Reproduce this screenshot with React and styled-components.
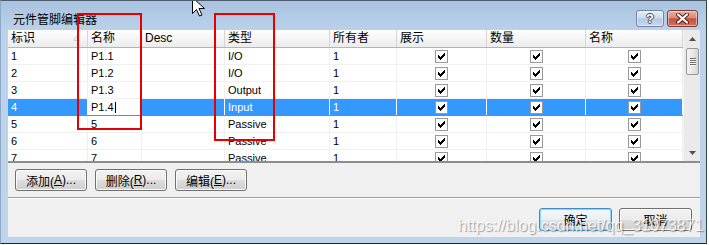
import React from 'react';
import styled, { createGlobalStyle } from 'styled-components';

const GlobalStyle = createGlobalStyle`
  html, body {
    margin: 0;
    padding: 0;
    background: #ffffff;
  }
  body {
    font-family: "Liberation Sans", "Noto Sans CJK SC", sans-serif;
  }
`;

const COLUMNS = '80px 54px 83px 105px 67px 90px 99px 97px';

const headers = ['标识', '名称', 'Desc', '类型', '所有者', '展示', '数量', '名称'];

const rows = [
  { id: '1', name: 'P1.1', type: 'I/O' },
  { id: '2', name: 'P1.2', type: 'I/O' },
  { id: '3', name: 'P1.3', type: 'Output' },
  { id: '4', name: 'P1.4', type: 'Input', selected: true },
  { id: '5', name: '5', type: 'Passive' },
  { id: '6', name: '6', type: 'Passive' },
  { id: '7', name: '7', type: 'Passive' },
];

const Window = styled.div`
  position: relative;
  width: 707px;
  height: 244px;
  box-sizing: border-box;
  display: flex;
  flex-direction: column;
  padding: 0 6px 6px 7px;
  background: linear-gradient(#a8c2e0 0px, #bcd2ea 30px, #bed4eb 100%);
  border-top: 1px solid #4e5d6e;
  border-left: 1px solid #8ea9c7;
  border-right: 1px solid #34414f;
  border-bottom: 1px solid #1c2631;
  box-shadow: 0 1px 0 #58c4da;
  overflow: hidden;
`;

const TitleBar = styled.div`
  height: 29px;
  flex-shrink: 0;
  display: flex;
  align-items: flex-start;
`;

const Title = styled.div`
  flex: 1;
  margin: 11px 0 0 5px;
  font-size: 12px;
  line-height: 16px;
  color: #000;
`;

const CaptionButton = styled.div`
  width: ${p => p.$w}px;
  height: 17px;
  box-sizing: border-box;
  margin-top: 9px;
  margin-right: ${p => p.$mr}px;
  border-radius: 3px;
  display: flex;
  align-items: center;
  justify-content: center;
  border: 1px solid ${p => (p.$close ? '#7c3a32' : '#6f86a6')};
  background: ${p =>
    p.$close
      ? 'linear-gradient(#eab0a3 0%, #dc8a7a 45%, #c5503f 52%, #d46f5d 100%)'
      : 'linear-gradient(#e6eef8 0%, #cddcee 45%, #b4c8e1 52%, #c8d8ec 100%)'};
  box-shadow: inset 0 0 0 1px rgba(255, 255, 255, 0.45);
`;

const HelpGlyph = styled.span`
  font: bold 13px/13px "Liberation Sans", sans-serif;
  color: #fff;
  text-shadow: -1px 0 #3c4d66, 1px 0 #3c4d66, 0 -1px #3c4d66, 0 1px #3c4d66;
`;

const Panel = styled.div`
  flex: 1;
  display: flex;
  flex-direction: column;
  background: #f0f0f0;
`;

const Grid = styled.div`
  height: 133px;
  box-sizing: border-box;
  display: flex;
  border-bottom: 2px solid #8d8d8d;
`;

const Table = styled.div`
  flex: 1;
  display: flex;
  flex-direction: column;
  background: #fff;
  overflow: hidden;
`;

const HeaderRow = styled.div`
  display: grid;
  grid-template-columns: ${COLUMNS};
  height: 18px;
  box-sizing: border-box;
  border-bottom: 1px solid #b5b5b5;
  background: linear-gradient(#ffffff, #f3f3f3 60%, #ececec);
`;

const HeaderCell = styled.div`
  display: flex;
  align-items: center;
  justify-content: space-between;
  padding-left: 3px;
  border-right: 1px solid #d5d5d5;
  font-size: 12px;
  line-height: 17px;
  color: #000;
  white-space: nowrap;
`;

const SortMark = styled.svg`
  width: 7px;
  height: 5px;
  margin-right: 7px;
`;

const Body = styled.div`
  flex: 1;
  overflow: hidden;
`;

const Row = styled.div`
  display: grid;
  grid-template-columns: ${COLUMNS};
  height: 17px;
  box-sizing: border-box;
  border-bottom: 1px solid ${p => (p.$selected ? '#3399ff' : '#f0f0f0')};
  background: ${p => (p.$selected ? '#3399ff' : '#fff')};
`;

const Cell = styled.div`
  display: flex;
  align-items: center;
  justify-content: ${p => (p.$center ? 'center' : 'flex-start')};
  padding-left: ${p => (p.$center ? 0 : 3)}px;
  border-right: 1px solid ${p => (p.$selected ? '#ffffff' : '#f0f0f0')};
  background: ${p => (p.$editing ? '#fff' : 'transparent')};
  font-size: 11px;
  line-height: 16px;
  color: ${p => (p.$selected && !p.$editing ? '#fff' : '#000')};
  white-space: nowrap;
  overflow: hidden;
`;

const Caret = styled.span`
  display: inline-block;
  width: 1px;
  height: 11px;
  margin-left: 1px;
  background: #000;
`;

const CheckBox = styled.span`
  width: 13px;
  height: 13px;
  box-sizing: border-box;
  border: 1px solid #999999;
  background: #fff;
  display: flex;
  align-items: center;
  justify-content: center;
`;

const Scrollbar = styled.div`
  width: 17px;
  display: flex;
  flex-direction: column;
  background: #eaeaea;
  border-left: 1px solid #f4f4f4;
  box-sizing: border-box;
`;

const ArrowButton = styled.div`
  height: 17px;
  flex-shrink: 0;
  display: flex;
  align-items: center;
  justify-content: center;
`;

const Thumb = styled.div`
  height: 27px;
  margin: 1px 1px 0 2px;
  box-sizing: border-box;
  border: 1px solid #979797;
  border-radius: 2px;
  background: linear-gradient(90deg, #f4f4f4, #e8e8e8 50%, #d6d6d6);
  display: flex;
  flex-direction: column;
  align-items: center;
  justify-content: center;
  gap: 1px;
`;

const GripLine = styled.span`
  width: 6px;
  height: 1px;
  background: #6d6d6d;
  box-shadow: 0 1px 0 #fafafa;
`;

const Track = styled.div`
  flex: 1;
`;

const ButtonBar = styled.div`
  display: flex;
  gap: 8px;
  padding: 6px 0 0 7px;
`;

const Button = styled.div`
  width: ${p => p.$w || 72}px;
  height: ${p => p.$h || 22}px;
  box-sizing: border-box;
  display: flex;
  align-items: center;
  justify-content: center;
  border: 1px solid ${p => (p.$default ? '#3c8fd0' : '#707070')};
  border-radius: 3px;
  background: ${p =>
    p.$default
      ? 'linear-gradient(#f4f8fb 0%, #eceff2 50%, #e0e4e8 51%, #d6dadf 100%)'
      : 'linear-gradient(#f2f2f2 0%, #ebebeb 50%, #dddddd 51%, #cfcfcf 100%)'};
  box-shadow: inset 0 0 0 1px ${p => (p.$default ? '#8fd4f4' : '#fbfbfb')};
  font-size: 12px;
  color: #000;
  white-space: nowrap;

  u {
    text-decoration: underline;
    text-underline-offset: 1px;
  }
`;

const Separator = styled.div`
  margin-top: 6px;
  height: 2px;
  box-sizing: border-box;
  border-top: 1px solid #a0a0a0;
  border-bottom: 1px solid #ffffff;
`;

const Footer = styled.div`
  flex: 1;
  display: flex;
  justify-content: flex-end;
  align-items: flex-start;
  gap: 7px;
  padding: 9px 8px 0 0;
`;

const Annotation = styled.div`
  position: absolute;
  left: ${p => p.$x}px;
  top: ${p => p.$y}px;
  width: ${p => p.$w}px;
  height: ${p => p.$h}px;
  box-sizing: border-box;
  border: 2px solid #e60000;
  pointer-events: none;
`;

const Watermark = styled.div`
  position: absolute;
  left: 457px;
  top: 217px;
  font-size: 16px;
  line-height: 16px;
  color: rgba(255, 255, 255, 0.8);
  text-shadow: 1px 1px 1px rgba(0, 0, 0, 0.35);
  white-space: nowrap;
  pointer-events: none;
`;

const Cursor = styled.svg`
  position: absolute;
  left: 191px;
  top: -4px;
  width: 13px;
  height: 20px;
`;

const Check = () => (
  <svg width="7" height="7" viewBox="0 0 7 7" shapeRendering="crispEdges">
    <path
      d="M6 0h1v1h-1z M5 1h2v1h-2z M0 2h1v1h-1z M4 2h3v1h-3z M0 3h2v1h-2z M3 3h3v1h-3z M0 4h5v1h-5z M1 5h3v1h-3z M2 6h1v1h-1z"
      fill="#000"
    />
  </svg>
);

const Arrow = ({ down }) => (
  <svg width="7" height="4" viewBox="0 0 7 4">
    <path d={down ? 'M0 0h7L3.5 4z' : 'M0 4h7L3.5 0z'} fill="#505050" />
  </svg>
);

const App = () => {
  return (
    <>
      <GlobalStyle />
      <Window>
        <TitleBar>
          <Title>元件管脚编辑器</Title>
          <CaptionButton $w={28} $mr={3}>
            <HelpGlyph>?</HelpGlyph>
          </CaptionButton>
          <CaptionButton $w={31} $mr={2} $close>
            <svg width="13" height="11" viewBox="0 0 13 11">
              <path d="M2 1.5L11 9.5M11 1.5L2 9.5" stroke="#4a1f1a" strokeWidth="4" strokeLinecap="round" />
              <path d="M2 1.5L11 9.5M11 1.5L2 9.5" stroke="#fff" strokeWidth="2.2" strokeLinecap="round" />
            </svg>
          </CaptionButton>
        </TitleBar>

        <Panel>
          <Grid>
            <Table>
              <HeaderRow>
                {headers.map((h, i) => (
                  <HeaderCell key={i}>
                    {h}
                    {i === 0 && (
                      <SortMark viewBox="0 0 7 5">
                        <path d="M0.5 4.5h6L3.5 0.5z" fill="#ececec" stroke="#cfcfcf" strokeWidth="1" />
                      </SortMark>
                    )}
                  </HeaderCell>
                ))}
              </HeaderRow>
              <Body>
                {rows.map(r => (
                  <Row key={r.id} $selected={r.selected}>
                    <Cell $selected={r.selected}>{r.id}</Cell>
                    <Cell $selected={r.selected} $editing={r.selected}>
                      {r.name}
                      {r.selected && <Caret />}
                    </Cell>
                    <Cell $selected={r.selected} />
                    <Cell $selected={r.selected}>{r.type}</Cell>
                    <Cell $selected={r.selected}>1</Cell>
                    {[0, 1, 2].map(k => (
                      <Cell key={k} $selected={r.selected} $center>
                        <CheckBox>
                          <Check />
                        </CheckBox>
                      </Cell>
                    ))}
                  </Row>
                ))}
              </Body>
            </Table>
            <Scrollbar>
              <ArrowButton>
                <Arrow />
              </ArrowButton>
              <Thumb>
                <GripLine />
                <GripLine />
                <GripLine />
                <GripLine />
              </Thumb>
              <Track />
              <ArrowButton>
                <Arrow down />
              </ArrowButton>
            </Scrollbar>
          </Grid>

          <ButtonBar>
            <Button>添加(<u>A</u>)...</Button>
            <Button>删除(<u>R</u>)...</Button>
            <Button>编辑(<u>E</u>)...</Button>
          </ButtonBar>
          <Separator />
          <Footer>
            <Button $w={73} $h={23} $default>确定</Button>
            <Button $w={73} $h={23}>取消</Button>
          </Footer>
        </Panel>

        <Annotation $x={76} $y={12} $w={65} $h={117} />
        <Annotation $x={213} $y={12} $w={61} $h={128} />
        <Watermark>https://blog.csdn.net/qq_31073871</Watermark>
        <Cursor viewBox="0 0 13 20">
          <path d="M0.5 0.5V16.5L4.5 12.5L7.5 19L10 18L7 11.5H12.5Z" fill="#fff" stroke="#000" strokeWidth="1" />
        </Cursor>
      </Window>
    </>
  );
};

export default App;
